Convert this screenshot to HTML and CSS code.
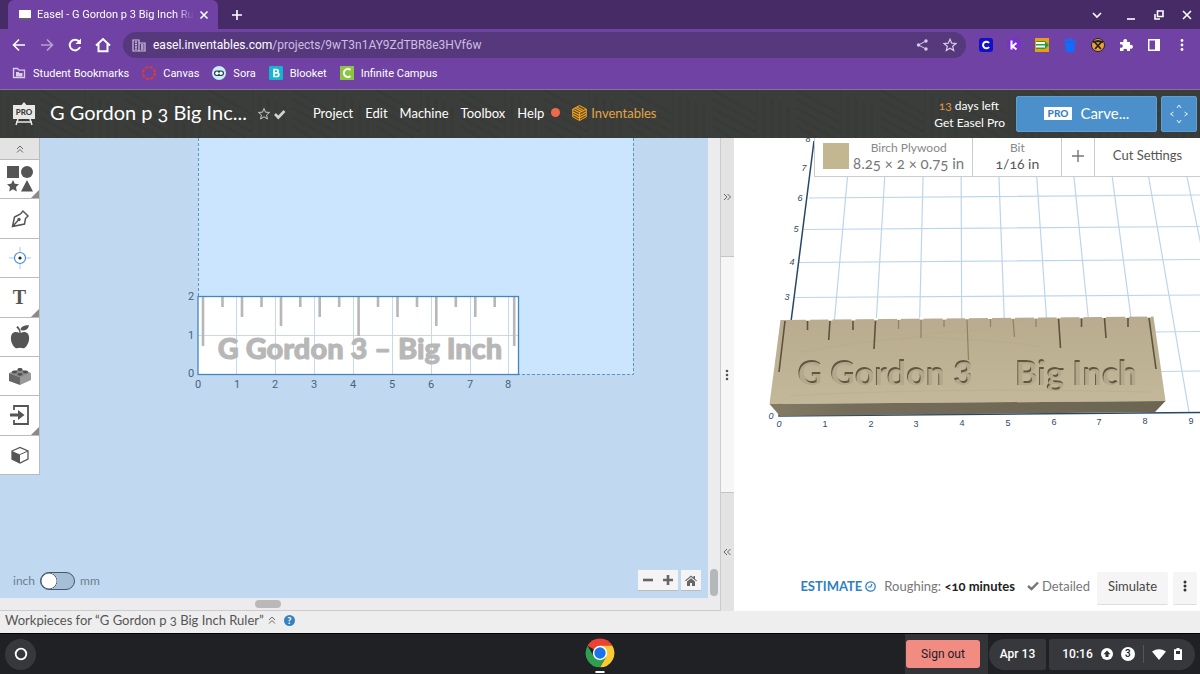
FILE: index.html
```html
<!DOCTYPE html>
<html lang="en">
<head>
<meta charset="utf-8">
<title>Easel - G Gordon p 3 Big Inch Ruler</title>
<link rel="stylesheet" href="styles.css">
</head>
<body>
<div class="tabstrip">
  <div class="tab">
    <svg class="favicon" width="14" height="12" viewBox="0 0 14 12"><rect x="1" y="1" width="12" height="8" fill="#fff"/><path d="M1 10h12" stroke="#666" stroke-width="1.5"/></svg>
    <span class="tab-title">Easel - G Gordon p 3 Big Inch Ruler</span>
    <button class="plain" aria-label="Close tab"><svg width="10" height="10" viewBox="0 0 10 10"><path d="M1.5 1.5l7 7M8.500 1.500l-7 7" class="ln"/></svg></button>
  </div>
  <button class="plain new-tab" aria-label="New tab"><svg width="12" height="12" viewBox="0 0 12 12"><path d="M6 1v10M1 6h10" class="ln"/></svg></button>
  <div class="window-controls">
    <button class="plain" aria-label="Tab search"><svg width="12" height="12" viewBox="0 0 12 12"><path d="M2 4l4 4 4-4" class="ln"/></svg></button>
    <button class="plain" aria-label="Minimise"><svg width="12" height="12" viewBox="0 0 12 12"><path d="M2 10h8" class="ln"/></svg></button>
    <button class="plain" aria-label="Restore"><svg width="12" height="12" viewBox="0 0 12 12"><path d="M4.500 2h5.500v5.500h-5.500zM2 5v5h5" class="ln"/></svg></button>
    <button class="plain" aria-label="Close"><svg width="12" height="12" viewBox="0 0 12 12"><path d="M2 2l8 8M10 2l-8 8" class="ln"/></svg></button>
  </div>
</div>

<div class="toolbar">
  <div class="nav">
    <button class="plain" aria-label="Back"><svg width="16" height="16" viewBox="0 0 16 16"><path d="M14 8H3M8 2.500L2.500 8 8 13.500" class="ln"/></svg></button>
    <button class="plain dim" aria-label="Forward"><svg width="16" height="16" viewBox="0 0 16 16"><path d="M2 8h11M8 2.500L13.500 8 8 13.500" class="ln"/></svg></button>
    <button class="plain" aria-label="Reload"><svg width="16" height="16" viewBox="0 0 16 16"><path d="M13 10a5.300 5.300 0 1 1-1.200-5.700" class="ln thick"/><path d="M14 1.500v5.500H8.500z" fill="#fff"/></svg></button>
    <button class="plain" aria-label="Home"><svg width="16" height="16" viewBox="0 0 16 16"><path d="M1 8.500L8 2l7 6.500M3.500 7v7.200h9V7" class="ln thick"/></svg></button>
  </div>
  <div class="omnibox">
    <svg width="14" height="13" viewBox="0 0 14 13"><path d="M1 1h6v11H1zM7 4h6v8H7z" fill="none" stroke="#cdbfe0" stroke-width="1.200"/><path d="M3 3h2M3 5.500h2M3 8h2M3 10.200h2M9 6h2.500M9 8h2.500M9 10h2.500" stroke="#cdbfe0" stroke-width="1.300"/></svg>
    <div class="url"><span class="host">easel.inventables.com</span>/projects/9wT3n1AY9ZdTBR8e3HVf6w</div>
    <button class="plain" aria-label="Share"><svg width="12" height="12" viewBox="0 0 12 12"><path d="M10 2L2.500 6 10 10" fill="none" stroke="#d9cde8"/><g fill="#d9cde8"><circle cx="10" cy="2" r="1.700"/><circle cx="2.500" cy="6" r="1.700"/><circle cx="10" cy="10" r="1.700"/></g></svg></button>
    <button class="plain" aria-label="Bookmark"><svg width="14" height="14" viewBox="0 0 14 14"><path d="M7 1.200l1.700 4 4.300.3-3.300 2.800 1 4.200L7 10.200l-3.700 2.300 1-4.200L1 5.500l4.300-.3z" fill="none" stroke="#d9cde8" stroke-width="1.200"/></svg></button>
  </div>
  <div class="extensions">
    <svg width="14" height="14" viewBox="0 0 14 14"><rect width="14" height="14" rx="3" fill="#1110c8"/><path d="M10 5a3.300 3.300 0 1 0 0 4" fill="none" stroke="#fff" stroke-width="2"/></svg>
    <svg width="14" height="14" viewBox="0 0 14 14"><circle cx="7" cy="7" r="7" fill="#7a2fd0"/><path d="M4.500 2.500v9M9.500 5L5.500 8.200 9.500 11.500" fill="none" stroke="#fff" stroke-width="2"/></svg>
    <svg width="14" height="14" viewBox="0 0 14 14"><rect width="14" height="14" fill="#f39a14"/><path d="M1 3h9l4 4-4 4H1z" fill="#1aa436"/><path d="M1 5h9M1 8.500h9" stroke="#fff" stroke-width="2"/></svg>
    <svg width="14" height="14" viewBox="0 0 14 14"><path d="M1 1.500h3.500V.5h5v1H13V3.500H1zM2 4.500h10l-.8 9.500H2.800z" fill="#0d6efd"/></svg>
    <svg width="14" height="14" viewBox="0 0 14 14"><circle cx="7" cy="7" r="6.500" fill="#f0a03a" stroke="#222"/><path d="M4 4.500l6 6.500M10 4.500L4 11M2 4l5-1 5 1" stroke="#222" stroke-width="1.800" fill="none"/></svg>
    <svg width="14" height="14" viewBox="0 0 14 14"><path d="M1 4h3.500a2 2 0 1 1 3.500 0H11v3a2 2 0 1 1 0 3.500V13H8a1.800 1.800 0 1 0-3.500 0H1V9.500a1.800 1.800 0 1 0 0-3z" fill="#fff"/></svg>
    <svg width="14" height="14" viewBox="0 0 14 14"><path d="M1 1h12v12H1zM2.500 2.500v9H8v-9z" fill="#fff" fill-rule="evenodd"/></svg>
    <svg width="14" height="14" viewBox="0 0 14 14"><g fill="#fff"><circle cx="7" cy="2.500" r="1.400"/><circle cx="7" cy="7" r="1.400"/><circle cx="7" cy="11.500" r="1.400"/></g></svg>
  </div>
</div>

<nav class="bookmarks">
  <a href="#"><svg width="14" height="14" viewBox="0 0 14 14"><path d="M1.500 2.500h4l1.500 1.700h5.500v7.300h-11z" fill="none" stroke="#d9cde8" stroke-width="1.300"/><path d="M4 6h3v1h3.500v3.500H4z" fill="#d9cde8"/></svg>Student Bookmarks</a>
  <a href="#"><svg width="14" height="14" viewBox="0 0 14 14"><circle cx="7" cy="7" r="6" fill="none" stroke="#e03a33" stroke-width="2" stroke-dasharray="3.200 1.500"/></svg>Canvas</a>
  <a href="#"><svg width="14" height="14" viewBox="0 0 14 14"><circle cx="7" cy="7" r="7" fill="#c9ecf5"/><rect x="2" y="4.500" width="10" height="5.500" rx="2.700" fill="#25404f"/><circle cx="5" cy="7.200" r="1.700" fill="#fff"/><circle cx="9" cy="7.200" r="1.700" fill="#fff"/></svg>Sora</a>
  <a href="#"><svg width="14" height="14" viewBox="0 0 14 14"><rect width="14" height="14" rx="1.500" fill="#14b5cf"/><path d="M5 3.500h2.500a1.600 1.600 0 0 1 0 3.400H5zm0 3.400h3a1.800 1.800 0 0 1 0 3.600H5z" fill="none" stroke="#fff" stroke-width="1.700"/></svg>Blooket</a>
  <a href="#"><svg width="14" height="14" viewBox="0 0 14 14"><rect width="14" height="14" fill="#8cc63f"/><path d="M10.500 4a4 4 0 1 0 0 6" fill="none" stroke="#fff" stroke-width="2"/></svg>Infinite Campus</a>
</nav>

<header class="app-header">
  <svg class="texture" width="100%" height="100%" aria-hidden="true"><defs><pattern id="hex" width="84" height="48" patternUnits="userSpaceOnUse"><path d="M0 0v48M8 4v44M16 8v40M24 48V12M32 48V16M40 0l44 24M40 9l44 24M40 18l44 24M40 27l38 21M40 36l20 12" fill="none" stroke="#343633" stroke-width="2.500"/></pattern></defs><rect width="100%" height="100%" fill="url(#hex)"/></svg>
  <svg width="22" height="24" viewBox="0 0 22 24"><path d="M0 3h8.500L11 0l2.500 3H22v14H0z" fill="#e8e8e6"/><path d="M5 17l-2 6M17 17l2 6M3 20h16" stroke="#e8e8e6" stroke-width="1.500"/><text x="11" y="12.500" class="badge-text">PRO</text></svg>
  <h1>G Gordon p 3 Big Inc...</h1>
  <svg class="status" width="28" height="14" viewBox="0 0 28 14"><path d="M6 1.500l1.500 3.700 4 .2-3 2.600 1 4L6 9.800 2.500 12l1-4-3-2.600 4-.2z" fill="none" stroke="#c9cac8"/><path d="M17 7l3.300 3.500L26.500 4" fill="none" stroke="#d3d4d2" stroke-width="2.600"/></svg>
  <nav class="menu">
    <a href="#">Project</a><a href="#">Edit</a><a href="#">Machine</a><a href="#">Toolbox</a><a href="#">Help<i class="dot"></i></a>
    <a href="#" class="brand"><svg width="15" height="16" viewBox="0 0 15 16"><path d="M7.500.5l6.800 3.700v7.600l-6.800 3.700L.7 11.800V4.200z" fill="#6b4a12" stroke="#eaa42c"/><path d="M.7 4.200l6.800 3.500 6.800-3.500M7.500 7.700v7.800M3 3l6.500 3.500M5 2l6.500 3.500M1 7l6.500 3.500M1 9.500l6.500 3.500M14 7l-6.500 3.500M14 9.500L7.500 13" fill="none" stroke="#eaa42c" stroke-width="1.100"/></svg>Inventables</a>
  </nav>
  <div class="trial"><span><b>13</b> days left</span><a href="#">Get Easel Pro</a></div>
  <button class="blue carve"><span class="pro">PRO</span>Carve...</button>
  <button class="blue jog" aria-label="Jog machine"><svg width="20" height="20" viewBox="0 0 20 20"><path d="M8 4l2-3 2 3M8 16l2 3 2-3M4.500 8L1.500 10l3 2M15.500 8l3 2-3 2" fill="none" stroke="#eaf4fc"/></svg></button>
</header>

<main class="workspace">
  <section class="design">
    <div class="toolbox">
      <button class="collapse" aria-label="Collapse tools"><svg width="8" height="8" viewBox="0 0 8 8"><path d="M1 4l3-3 3 3M1 7.500l3-3 3 3" class="gr"/></svg></button>
      <button class="more" aria-label="Shapes"><svg width="26" height="26" viewBox="0 0 26 26" fill="#555"><path d="M0 0h12v12H0z"/><circle cx="20" cy="6" r="6"/><path d="M6 14l1.800 3.800 4.200.4-3 2.900.8 4.300L6 23.300l-3.800 2.100.8-4.300-3-2.900 4.200-.4zM20 14l6 11.500H14z"/></svg></button>
      <button aria-label="Pen"><svg width="20" height="20" viewBox="0 0 20 20"><path d="M2.500 17.500L4.500 8l6-3L13 2l5 5-2.500 2.500-1 5.500zM3 17l5-5.500" fill="none" stroke="#555" stroke-width="1.500"/><circle cx="9" cy="10.500" r="1.700" fill="#555"/></svg></button>
      <button aria-label="Drill"><svg width="22" height="22" viewBox="0 0 22 22"><path d="M11 0v6M11 16v6M0 11h6M16 11h6" stroke="#a9cbed"/><circle cx="11" cy="11" r="5.500" fill="none" stroke="#4a8fdf" stroke-width="1.200"/><circle cx="11" cy="11" r="1.600" fill="#222"/></svg></button>
      <button class="more letter" aria-label="Text">T</button>
      <button aria-label="Icons"><svg width="20" height="24" viewBox="0 0 20 24" fill="#555"><path d="M9.500 8C7 6.500 4 6.500 2.300 8.500-1 13 2 21 5.500 23c1.500.8 3-.2 4.500-.2s3 1 4.500.2C18 21 21 13 17.700 8.500 16 6.500 13 6.500 10.800 8 10.500 5 9.500 2.500 7.500 1L6.300 2.500C8.500 4 9.200 6 9.500 8zM10.500 5c0-3.500 4-5 8.500-4.800C18.500 4 15 6.500 10.500 5z"/></svg></button>
      <button aria-label="Apps"><svg width="22" height="18" viewBox="0 0 22 18"><path d="M0 6l11 4v8L0 14z" fill="#666"/><path d="M11 10l11-4v7l-11 5z" fill="#999"/><path d="M0 6l11-4 11 4-11 4.500z" fill="#8a8a8a"/><g fill="#4f4f4f"><ellipse cx="11" cy="2.500" rx="2.600" ry="1.400"/><ellipse cx="5.500" cy="5" rx="2.600" ry="1.400"/><ellipse cx="16.500" cy="5" rx="2.600" ry="1.400"/><ellipse cx="11" cy="7.300" rx="2.600" ry="1.400"/></g></svg></button>
      <button class="more" aria-label="Import"><svg width="20" height="20" viewBox="0 0 20 20"><path d="M4 5V1h14v18H4v-4" fill="none" stroke="#555" stroke-width="1.800"/><path d="M0 8.500h8V5l6.500 5L8 15v-3.500H0z" fill="#555"/></svg></button>
      <button aria-label="3D"><svg width="18" height="18" viewBox="0 0 18 18"><path d="M1 5l8-3.500L17 5v8l-8 4-8-4z" fill="#fff" stroke="#555" stroke-width="1.300"/><path d="M1 5l8 3.500V17l-8-4z" fill="#555"/><path d="M9 8.500L17 5" stroke="#555"/></svg></button>
    </div>
    <svg class="canvas" viewBox="40 138 668 460" preserveAspectRatio="xMinYMin slice" role="img" aria-label="Design canvas">
      <rect x="198" y="130" width="435" height="244" fill="#cae5fd"/>
      <path d="M198.500 138V374M633.500 138V374.500H519" fill="none" stroke="#5f94bf" stroke-dasharray="3 2"/>
      <rect x="198" y="296" width="321" height="78" fill="#fff"/>
      <path d="M236.500 296v78M275.500 296v78M314.500 296v78M353.500 296v78M392.500 296v78M431.500 296v78M470.500 296v78M508.500 296v78M198 335.500h321" stroke="#c6d9ee"/>
      <path d="M203 297v49M222.500 297v10M242 297v20M261.500 297v10M281 297v29M300.300 297v10M319.700 297v20M339.200 297v10M358.600 297v39M378 297v10M397.500 297v20M417 297v10M436.300 297v29M455.800 297v10M475.300 297v20M494.700 297v10M514.200 297v49" stroke="#b7b7b7" stroke-width="2.600"/>
      <rect x="198" y="296.500" width="320.500" height="78" fill="none" stroke="#3f87c4" stroke-width="1.300"/>
      <text x="360" y="359" class="design-text">G Gordon 3 – Big Inch</text>
      <g class="axis"><text x="191" y="300">2</text><text x="191" y="339">1</text><text x="191" y="377">0</text><text x="198" y="388">0</text><text x="237" y="388">1</text><text x="275" y="388">2</text><text x="314" y="388">3</text><text x="353" y="388">4</text><text x="392" y="388">5</text><text x="431" y="388">6</text><text x="470" y="388">7</text><text x="508" y="388">8</text></g>
    </svg>
    <label class="units">inch <input type="checkbox" role="switch"> mm</label>
    <div class="zoom">
      <div><button aria-label="Zoom out"><svg width="10" height="10" viewBox="0 0 10 10"><path d="M0 5h10" stroke="#666" stroke-width="2.600"/></svg></button><button aria-label="Zoom in"><svg width="10" height="10" viewBox="0 0 10 10"><path d="M0 5h10M5 0v10" stroke="#666" stroke-width="2.600"/></svg></button></div>
      <button aria-label="Zoom home"><svg width="12" height="11" viewBox="0 0 12 11"><path d="M0 5.500L6 .5l2.500 2V1H10v3l2 1.500-.7.800L6 2 .7 6.300zM2 6.500L6 3.200l4 3.300V11H7V8H5v3H2z" fill="#666"/></svg></button>
    </div>
  </section>
  <div class="vscroll"><i></i></div>
  <div class="hscroll"><i></i></div>
  <div class="splitter">
    <button aria-label="Expand design"><svg width="8" height="8" viewBox="0 0 8 8"><path d="M1 1l3 3-3 3M4.500 1l3 3-3 3" class="gr"/></svg></button>
    <div class="grip"><svg width="4" height="12" viewBox="0 0 4 12" fill="#555"><circle cx="2" cy="2" r="1.300"/><circle cx="2" cy="6" r="1.300"/><circle cx="2" cy="10" r="1.300"/></svg></div>
    <button aria-label="Expand preview"><svg width="8" height="8" viewBox="0 0 8 8"><path d="M4 1L1 4l3 3M7.500 1l-3 3 3 3" class="gr"/></svg></button>
  </div>
  <section class="preview">
    <svg class="scene" viewBox="734 138 466 473" preserveAspectRatio="xMinYMin slice" role="img" aria-label="3D preview">
      <defs>
        <linearGradient id="front" x1="0" x2="1"><stop offset="0" stop-color="#837b65"/><stop offset=".2" stop-color="#756d59"/><stop offset="1" stop-color="#6c6552"/></linearGradient>
        <linearGradient id="top" x1="0" y1="0" x2="0" y2="1"><stop offset="0" stop-color="#b8ab8f"/><stop offset="1" stop-color="#c3b899"/></linearGradient>
        <filter id="carve" x="-5%" y="-10%" width="110%" height="120%">
          <feOffset in="SourceAlpha" dx="1.300" dy="1.800" result="o"/>
          <feComposite in="SourceAlpha" in2="o" operator="out" result="rim"/>
          <feFlood flood-color="#5f5643"/><feComposite in2="rim" operator="in" result="dark"/>
          <feMerge><feMergeNode in="SourceGraphic"/><feMergeNode in="dark"/></feMerge>
        </filter>
      </defs>
      <g fill="none" stroke="#bdd5ea" stroke-width="1.200">
        <path d="M814 168L1200 165M809 198L1200 195M804 229.500L1200 226.500M799 262.500L1200 259.500M795 297.500L1200 295M1150 332L1200 331.500M1160 371.500L1200 371"/>
        <path d="M851 138L834 325M887 138L876 325M924 138L919.500 325M961 138L961.700 325M997.500 138L1004.500 325M1034 138L1047 325M1070 138L1089 325M1107 138L1132 325M1142 138L1189 412M1179 138L1202 250"/>
      </g>
      <path d="M814 141L779 416L1200 412.500" fill="none" stroke="#26476a" stroke-width="1.500"/>
      <path d="M780.500 320L1153.500 316.500L1165.500 401L769.500 404z" fill="url(#top)"/>
      <path d="M769.500 404L1165.500 401L1155 412L780 416z" fill="url(#front)"/>
      <path d="M800 352q70-12 110-14t130 8M790 396q150-9 360-4M900 340q40-10 90-10" fill="none" stroke="#b3a584" opacity=".35"/>
      <g fill="none" stroke="#5c533f" stroke-width="1.600">
        <path d="M785 321l-6 51M807.500 321v9M830 321l-1.300 19M853 321v9M875.500 321l-1.500 28M1128 318v9M1104.500 318l1.500 20M1081.500 318v9M1058.500 318l2 30M1149 318l7 51"/>
        <path d="M898.500 320v9M921 320v18M944 320v7M967 320l1.500 40M990.500 319v8M1013 319l1.500 18M1036 319v8" stroke="#8d8166" stroke-width="1.200"/>
      </g>
      <path d="M806 319.500h4M828.500 319.500h4M851.500 319.300h4M874 319h4M897 318.800h4M919.500 318.600h4M942.500 318.400h4M965 318h4M988 318h4M1011 317.800h4M1034 317.500h4M1056.500 317.500h4M1079.500 317.300h4M1102 317h4M1125 316.700h4M1147 316.500h4" stroke="#fff" stroke-width="2"/>
      <g class="carved" filter="url(#carve)"><text x="885" y="385">G Gordon 3</text><text x="1076" y="385">Big Inch</text></g>
      <g class="scene-axis"><text x="808" y="142">8</text><text x="804" y="171">7</text><text x="800" y="201">6</text><text x="796" y="232">5</text><text x="792" y="265">4</text><text x="787" y="300">3</text><text x="771" y="419">0</text><text x="779" y="427">0</text></g>
      <g class="scene-axis upright"><text x="825" y="427">1</text><text x="871" y="427">2</text><text x="916" y="427">3</text><text x="962" y="426">4</text><text x="1008" y="426">5</text><text x="1054" y="425">6</text><text x="1099" y="425">7</text><text x="1145" y="424">8</text><text x="1191" y="424">9</text></g>
    </svg>
    <div class="setup">
      <button class="material"><i class="swatch"></i><span><small>Birch Plywood</small>8.25 × 2 × 0.75 in</span></button>
      <button class="bit"><small>Bit</small>1/16 in</button>
      <button class="add" aria-label="Add bit"><svg width="12" height="12" viewBox="0 0 12 12"><path d="M6 0v12M0 6h12" stroke="#777" stroke-width="1.400"/></svg></button>
      <button class="cut">Cut Settings</button>
    </div>
    <div class="estimate">
      <a href="#">ESTIMATE <svg width="11" height="11" viewBox="0 0 11 11"><circle cx="5.500" cy="5.500" r="4.700" fill="none" stroke="#2f7fc4" stroke-width="1.300"/><path d="M7 3L5.700 6H3" fill="none" stroke="#2f7fc4" stroke-width="1.200"/></svg></a>
      <span class="rough">Roughing: <b>&lt;10 minutes</b></span>
      <span class="detail"><svg width="12" height="10" viewBox="0 0 12 10"><path d="M1 5l3.500 3L11 1.500" fill="none" stroke="#777" stroke-width="2.400"/></svg>Detailed</span>
      <button class="simulate">Simulate</button>
      <button class="dots" aria-label="More"><svg width="4" height="14" viewBox="0 0 4 14" fill="#333"><circle cx="2" cy="3" r="1.500"/><circle cx="2" cy="7" r="1.500"/><circle cx="2" cy="11" r="1.500"/></svg></button>
    </div>
  </section>
</main>

<footer class="workpieces">Workpieces for “G Gordon p 3 Big Inch Ruler”
  <svg width="8" height="8" viewBox="0 0 8 8"><path d="M1 4l3-3 3 3M1 7.500l3-3 3 3" class="gr"/></svg>
  <button class="help" aria-label="Help">?</button>
</footer>

<div class="shelf">
  <div class="shelf-start"><button class="launcher" aria-label="Launcher"><svg width="14" height="14" viewBox="0 0 14 14"><circle cx="7" cy="7" r="5.300" fill="none" stroke="#fff" stroke-width="1.800"/></svg></button></div>
  <button class="plain chrome" aria-label="Chrome"><svg width="30" height="36" viewBox="0 0 30 36"><path d="M15 15L2.600 7.800A14.300 14.300 0 0 1 27.400 7.800z" fill="#ea4335"/><path d="M27.400 7.800A14.300 14.300 0 0 1 15 29.300l6.200-10.700L15 7.800z" fill="#fbc934"/><path d="M15 29.300A14.300 14.300 0 0 1 2.600 7.800l6.200 10.800L15 22l6.200-3.400z" fill="#2f9e4f"/><circle cx="15" cy="15" r="7.200" fill="#fff"/><circle cx="15" cy="15" r="5.700" fill="#1a73e8"/><path d="M10.500 34h9" stroke="#fff" stroke-width="2"/></svg></button>
  <div class="shelf-end">
    <div class="signout"><button>Sign out</button></div>
    <button class="pill date">Apr 13</button>
    <button class="pill tray">10:16
      <svg width="12" height="12" viewBox="0 0 12 12"><circle cx="6" cy="6" r="6" fill="#fff"/><path d="M6 2.500L9.500 6.200H7.500V9h-3V6.200h-2z" fill="#333"/></svg>
      <span class="count">3</span><i class="sep"></i>
      <svg width="14" height="11" viewBox="0 0 14 11"><path d="M7 11L0 2.500Q7-2 14 2.500z" fill="#fff"/></svg>
      <svg class="battery" width="8" height="12" viewBox="0 0 8 12"><path d="M2.500 0h3v1.200H8V12H0V1.200h2.500z" fill="#fff"/><path d="M2 3h4v3H2z" fill="#333"/></svg>
    </button>
  </div>
</div>
</body>
</html>
```
FILE: styles.css
```css
* { box-sizing: border-box; }
body {
  margin: 0;
  min-height: 100vh;
  display: flex;
  flex-direction: column;
  font-family: Roboto, sans-serif;
  font-size: 11px;
  color: #fff;
  overflow: hidden;
}
button { font: inherit; color: inherit; border: 0; margin: 0; padding: 0; background: none; display: flex; align-items: center; justify-content: center; }
a { color: inherit; text-decoration: none; }
svg { display: block; flex: none; }
.ln { fill: none; stroke: #fff; stroke-width: 1.6; }
.thick { stroke-width: 2; }
.gr { fill: none; stroke: #666; stroke-width: 1; }
.dim { opacity: .5; }

/* Browser chrome */
.tabstrip { height: 29px; flex: none; display: flex; align-items: center; background: #472b66; padding: 0 7px 0 8px; }
.tab { width: 210px; height: 29px; display: flex; align-items: center; gap: 5px; padding: 0 9px 0 10px; background: #6f42a4; border-radius: 6px 6px 0 0; }
.tab-title { flex: 1; white-space: nowrap; overflow: hidden; -webkit-mask-image: linear-gradient(90deg, #000 88%, transparent); }
.new-tab { margin-left: 13px; }
.window-controls { margin-left: auto; display: flex; gap: 16px; }
.window-controls button:first-child { margin-right: 6px; }
.toolbar { height: 32px; flex: none; display: flex; align-items: center; background: #6f42a4; padding: 0 11px; }
.nav { display: flex; gap: 12px; margin-right: 12px; }
.omnibox { flex: 1; height: 26px; display: flex; align-items: center; border-radius: 13px; background: #56387d; padding: 0 9px; gap: 15px; }
.url { flex: 1; margin-left: -8px; font-size: 12px; color: #cdbfe0; }
.host { color: #fff; }
.extensions { display: flex; gap: 14px; margin-left: 13px; }
.bookmarks { height: 29px; flex: none; display: flex; align-items: center; gap: 13px; background: #6f42a4; border-bottom: 1px solid #84749a; padding: 0 12px 4px; }
.bookmarks a { display: flex; align-items: center; gap: 7px; }

/* Application header */
.app-header { position: relative; height: 48px; flex: none; display: flex; align-items: center; background: #3b3d3a; padding: 0 3px 0 13px; font-family: Lato, sans-serif; font-size: 13px; }
.app-header > * { position: relative; }
.app-header > .texture { position: absolute; inset: 0; opacity: .4; }
.badge-text { font: 900 8px Lato, sans-serif; text-anchor: middle; fill: #3b3d3a; }
h1 { margin: 0 11px 0 15px; padding-bottom: 4px; font-size: 20px; font-weight: 400; font-variant-numeric: oldstyle-nums; }
.menu { display: flex; align-items: center; gap: 12px; margin-left: 27px; padding-bottom: 3px; }
.menu a { display: flex; align-items: center; }
.dot { width: 9px; height: 9px; border-radius: 50%; background: #f0694a; margin-left: 7px; }
.menu .brand { color: #e3a544; gap: 4px; }
.trial { margin-left: auto; margin-right: 11px; display: flex; flex-direction: column; align-items: flex-end; font-size: 12px; line-height: 17px; }
.trial span { margin-right: 6px; }
.trial b { font-weight: 400; color: #e8963c; font-variant-numeric: oldstyle-nums; }
.blue { height: 36px; border-radius: 2px; background: #4b90ca; border: 1px solid #5b9fd6; }
.carve { width: 141px; gap: 8px; font-size: 15px; padding-bottom: 2px; margin-right: 4px; }
.pro { background: #fff; color: #3a7fba; font-size: 10px; font-weight: 900; line-height: 13px; padding: 0 4px; }
.jog { width: 36px; }

/* Workspace */
.workspace { flex: 1; display: grid; grid-template-columns: minmax(0, 708fr) 12px 14px minmax(0, 466fr); grid-template-rows: minmax(0, 1fr) 13px; font-family: Lato, sans-serif; font-size: 13px; color: #555; background: #ececee; min-height: 0; }
.design { position: relative; display: flex; align-items: flex-start; background: #c0d9f0; overflow: hidden; }
.canvas { flex: 1; min-width: 0; height: 100%; }
.toolbox { flex: none; width: 40px; height: 337px; display: flex; flex-direction: column; background: #fff; }
.toolbox button { flex: 1; position: relative; border-right: 1px solid #bbb; border-bottom: 1px solid #bbb; }
.toolbox .collapse { flex: 0 0 22px; background: #e3e3e3; }
.more::after { content: ""; position: absolute; right: 0; bottom: 0; border: 4px solid #8a8a8a; border-top-color: transparent; border-left-color: transparent; }
.letter { font: 700 20px "Liberation Serif", serif; }
.design-text { font: 900 29px Lato, sans-serif; text-anchor: middle; fill: #b7b7b7; stroke: #b7b7b7; stroke-width: 1; stroke-linejoin: round; }
.axis { font: 11px Roboto, sans-serif; text-anchor: middle; fill: #46647f; }
.units { position: absolute; left: 13px; bottom: 8px; display: flex; align-items: center; gap: 5px; font-size: 12px; line-height: 18px; color: #6c7e90; }
.units input { appearance: none; width: 35px; height: 18px; margin: 0; border: 1px solid #44566a; border-radius: 9px; background: radial-gradient(circle at 8px 8px, #fff 7px, #44566a 8px, #a6bfd6 8px); }
.zoom { position: absolute; right: 7px; bottom: 7px; display: flex; gap: 3px; }
.zoom div { display: flex; }
.zoom button { width: 20px; height: 21px; background: #f4f4f4; border-bottom: 1px solid #bbb; }
.vscroll { grid-column: 2; display: flex; align-items: flex-end; justify-content: center; padding-bottom: 2px; }
.vscroll i { width: 8px; height: 27px; border-radius: 4px; background: #b5b8ba; }
.hscroll { grid-area: 2 / 1 / 3 / 3; padding: 2px 0 0 255px; border-bottom: 1px solid #ccc; }
.hscroll i { display: block; width: 26px; height: 8px; border-radius: 4px; background: #b9b9b9; }
.splitter { grid-area: 1 / 3 / 3 / 4; display: flex; flex-direction: column; border-left: 1px solid #ccc; background: #e3e3e3; }
.splitter button, .grip { padding-right: 2px; }
.splitter button { flex: 1; }
.grip { flex: 2; display: flex; align-items: center; justify-content: center; background: #f6f6f6; border: solid #c4c4c4; border-width: 1px 0; }
.preview { grid-area: 1 / 4 / 3 / 5; position: relative; background: #fff; overflow: hidden; }
.scene { width: 100%; height: 100%; }
.carved { font: 900 34px Lato, sans-serif; text-anchor: middle; fill: #b3a88b; }
.scene-axis { font: italic 9px "Liberation Sans", sans-serif; text-anchor: middle; fill: #30496b; }
.upright { font-style: normal; }
.setup { position: absolute; top: 0; right: 0; width: 386px; height: 39px; display: flex; background: #fff; border: solid #ccc; border-width: 0 0 1px 1px; font-size: 15px; font-variant-numeric: oldstyle-nums; color: #777; }
.setup button { border-right: 1px solid #ccc; line-height: 17px; padding-bottom: 2px; }
.setup small { display: block; font-size: 12px; line-height: 14px; color: #888; }
.setup .material { flex: 159; gap: 4px; }
.swatch { width: 26px; height: 26px; background: #c3b791; }
.setup .bit { flex: 89; flex-direction: column; font-size: 14px; color: #555; }
.setup .add { flex: 32; }
.setup .cut { flex: 106; border: 0; font-size: 13px; color: #555; padding-bottom: 4px; }
.estimate { position: absolute; right: 3px; bottom: 6px; display: flex; align-items: center; font-variant-numeric: oldstyle-nums; }
.estimate > :not(button) { padding-bottom: 5px; }
.estimate a { display: flex; align-items: center; gap: 3px; color: #2f7fc4; font-weight: 700; }
.rough { margin-left: 8px; color: #777; }
.rough b { color: #222; }
.detail { display: flex; align-items: center; gap: 3px; margin: 0 7px 0 12px; color: #777; }
.estimate button { height: 33px; padding-bottom: 4px; background: #f5f5f5; border-bottom: 1px solid #ddd; border-radius: 2px; color: #444; }
.simulate { width: 71px; margin-right: 5px; }
.dots { width: 24px; }

.workpieces { height: 22px; flex: none; display: flex; align-items: center; gap: 4px; padding: 0 5px 4px; background: #eee; color: #555; font: 13px Lato, sans-serif; font-variant-numeric: oldstyle-nums; }
.help { width: 11px; height: 11px; margin-left: 4px; border-radius: 50%; background: #3781c2; color: #fff; font-size: 9px; font-weight: 900; }

/* System shelf */
.shelf { height: 41px; flex: none; display: grid; grid-template-columns: 1fr auto 1fr; align-items: center; background: #202125; border-top: 1px solid #000; font-size: 12px; }
.launcher { width: 31px; height: 31px; margin-left: 5px; border-radius: 50%; background: #37383b; }
.chrome { padding-top: 4px; }
.shelf-end { display: flex; justify-content: flex-end; align-items: center; padding-right: 5px; }
.signout { height: 40px; display: flex; align-items: center; padding: 0 8px 0 1px; background: #333437; }
.signout button { width: 74px; height: 28px; border-radius: 3px; background: #f28b82; color: #202125; }
.pill { height: 31px; background: #37383b; font-weight: 500; }
.date { width: 57px; margin: 0 3px 0 1px; border-radius: 16px 3px 3px 16px; }
.tray { width: 146px; gap: 8px; border-radius: 3px 16px 16px 3px; }
.count { width: 14px; height: 14px; border-radius: 50%; background: #fff; color: #222; font-size: 10px; line-height: 14px; text-align: center; }
.sep { width: 1px; height: 18px; background: #55565a; }
```
